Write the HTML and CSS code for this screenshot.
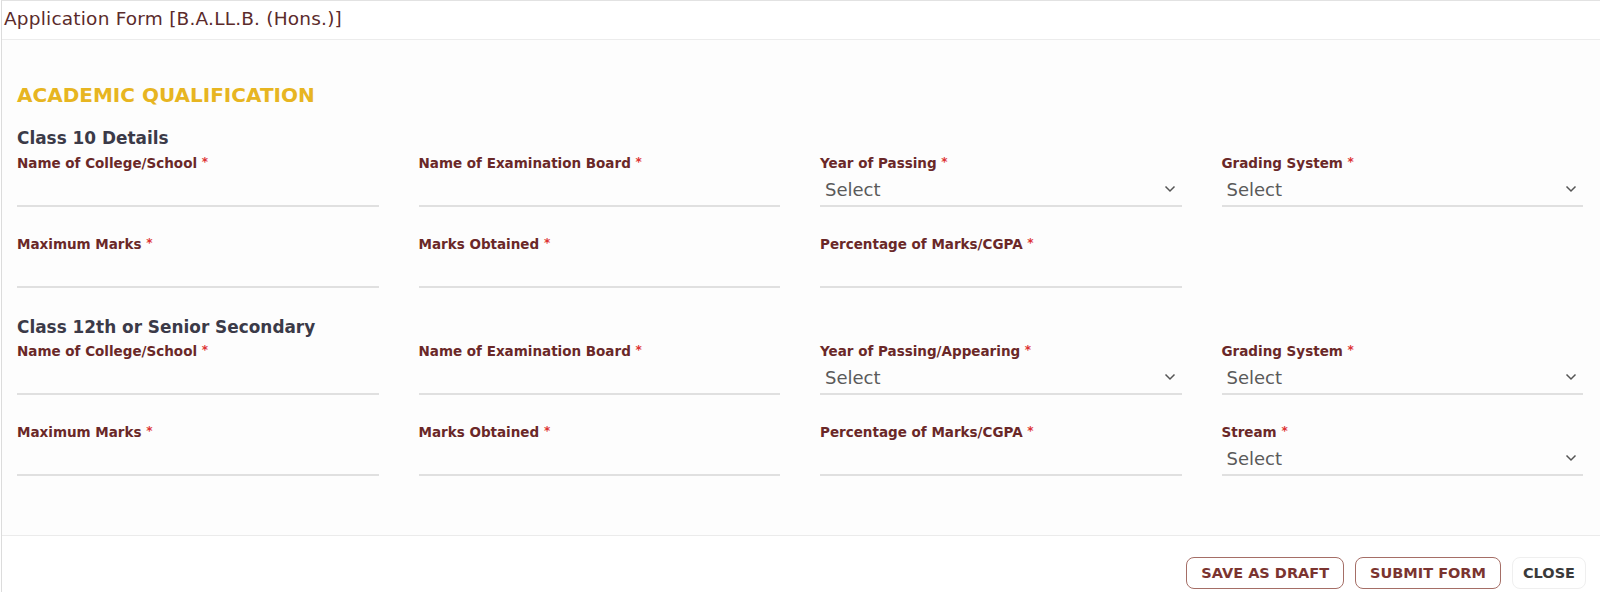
FILE: index.html
```html
<!DOCTYPE html>
<html lang="en">
<head>
<meta charset="utf-8">
<title>Application Form</title>
<link rel="stylesheet" href="styles.css">
</head>
<body>
<div class="modal">
  <header class="modal-header">Application Form [B.A.LL.B. (Hons.)]</header>
  <main class="modal-body">
    <h2 class="section-title">ACADEMIC QUALIFICATION</h2>

    <h3 class="group-title">Class 10 Details</h3>
    <div class="grid">
      <div class="field"><label>Name of College/School <span class="req">*</span></label><div class="input"></div></div>
      <div class="field"><label>Name of Examination Board <span class="req">*</span></label><div class="input"></div></div>
      <div class="field"><label>Year of Passing <span class="req">*</span></label><div class="input select"><span>Select</span><svg class="chev" width="12" height="8" viewBox="0 0 12 8"><path d="M1.5 1.5 L6 6 L10.5 1.5" fill="none" stroke="#555" stroke-width="1.5"/></svg></div></div>
      <div class="field"><label>Grading System <span class="req">*</span></label><div class="input select"><span>Select</span><svg class="chev" width="12" height="8" viewBox="0 0 12 8"><path d="M1.5 1.5 L6 6 L10.5 1.5" fill="none" stroke="#555" stroke-width="1.5"/></svg></div></div>
      <div class="field"><label>Maximum Marks <span class="req">*</span></label><div class="input"></div></div>
      <div class="field"><label>Marks Obtained <span class="req">*</span></label><div class="input"></div></div>
      <div class="field"><label>Percentage of Marks/CGPA <span class="req">*</span></label><div class="input"></div></div>
    </div>

    <h3 class="group-title">Class 12th or Senior Secondary</h3>
    <div class="grid">
      <div class="field"><label>Name of College/School <span class="req">*</span></label><div class="input"></div></div>
      <div class="field"><label>Name of Examination Board <span class="req">*</span></label><div class="input"></div></div>
      <div class="field"><label>Year of Passing/Appearing <span class="req">*</span></label><div class="input select"><span>Select</span><svg class="chev" width="12" height="8" viewBox="0 0 12 8"><path d="M1.5 1.5 L6 6 L10.5 1.5" fill="none" stroke="#555" stroke-width="1.5"/></svg></div></div>
      <div class="field"><label>Grading System <span class="req">*</span></label><div class="input select"><span>Select</span><svg class="chev" width="12" height="8" viewBox="0 0 12 8"><path d="M1.5 1.5 L6 6 L10.5 1.5" fill="none" stroke="#555" stroke-width="1.5"/></svg></div></div>
      <div class="field"><label>Maximum Marks <span class="req">*</span></label><div class="input"></div></div>
      <div class="field"><label>Marks Obtained <span class="req">*</span></label><div class="input"></div></div>
      <div class="field"><label>Percentage of Marks/CGPA <span class="req">*</span></label><div class="input"></div></div>
      <div class="field"><label>Stream <span class="req">*</span></label><div class="input select"><span>Select</span><svg class="chev" width="12" height="8" viewBox="0 0 12 8"><path d="M1.5 1.5 L6 6 L10.5 1.5" fill="none" stroke="#555" stroke-width="1.5"/></svg></div></div>
    </div>
  </main>
  <footer class="modal-footer">
    <button class="btn btn-outline">SAVE AS DRAFT</button>
    <button class="btn btn-outline">SUBMIT FORM</button>
    <button class="btn btn-light">CLOSE</button>
  </footer>
</div>
</body>
</html>
```
FILE: styles.css
```css
html, body {
  margin: 0;
  padding: 0;
  background: #ffffff;
}
body {
  font-family: "DejaVu Sans", "Open Sans", sans-serif;
  width: 1600px;
  height: 592px;
  overflow: hidden;
}
.modal {
  border-top: 1px solid #e2e2e2;
  border-left: 1px solid #dcdcdc;
  margin-left: 1px;
  height: 591px;
  display: flex;
  flex-direction: column;
  background: #fdfdfd;
}
.modal-header {
  flex: none;
  height: 39px;
  box-sizing: border-box;
  border-bottom: 1px solid #ececec;
  padding: 7px 0 0 2px;
  font-size: 18.5px;
  line-height: 22px;
  color: #5b2b2b;
  letter-spacing: 0.2px;
  background: #ffffff;
}
.modal-body {
  flex: 1;
  padding: 43px 17px 0 15px;
  box-sizing: border-box;
  border-bottom: 1px solid #ebebeb;
}
.section-title {
  margin: 0 0 20px 0;
  font-size: 20px;
  line-height: 24px;
  font-weight: bold;
  color: #e7b521;
}
.group-title {
  margin: 0 0 4px 0;
  font-size: 16.9px;
  line-height: 22px;
  font-weight: bold;
  color: #3b3a48;
}
.grid + .group-title {
  margin-bottom: 3px;
}
.grid {
  display: grid;
  grid-template-columns: repeat(4, 1fr);
  column-gap: 40px;
  row-gap: 27px;
  margin-bottom: 28px;
}
.field label {
  display: block;
  font-size: 13.5px;
  line-height: 18px;
  font-weight: bold;
  color: #6a2828;
}
.req {
  color: #d33;
  font-size: 12px;
  vertical-align: 2px;
}
.input {
  height: 35px;
  box-sizing: border-box;
  border-bottom: 2px solid #e0e0e0;
}
.select {
  display: flex;
  align-items: center;
  justify-content: space-between;
  padding: 1px 6px 0 5px;
  font-size: 18px;
  color: #5a5a5a;
}
.chev {
  display: block;
}
.modal-footer {
  flex: none;
  height: 56px;
  box-sizing: border-box;
  display: flex;
  justify-content: flex-end;
  align-items: flex-start;
  gap: 11px;
  padding: 21px 14px 0 0;
  background: #ffffff;
}
.btn {
  height: 32px;
  box-sizing: border-box;
  border-radius: 8px;
  font-family: "DejaVu Sans", sans-serif;
  font-size: 14.5px;
  font-weight: bold;
  padding: 0 14px;
  background: #ffffff;
  cursor: pointer;
}
.btn-outline {
  border: 1px solid #a56e66;
  color: #7b3430;
}
.btn-light {
  border: 1px solid #efefef;
  color: #3a3a3a;
  padding: 0 10px;
}
```
